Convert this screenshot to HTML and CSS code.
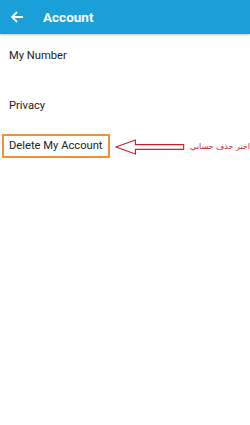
FILE: index.html
```html
<!DOCTYPE html>
<html>
<head>
<meta charset="utf-8">
<link rel="stylesheet" href="styles.css">
</head>
<body>
<header class="bar">
  <svg class="back" width="14" height="14" viewBox="0 0 14 14"><path d="M13 7H2M7 2L2 7l5 5" fill="none" stroke="#fff" stroke-width="1.8"/></svg>
  <span class="title">Account</span>
</header>
<main class="list">
  <div class="item">My Number</div>
  <div class="item">Privacy</div>
  <div class="row">
    <div class="item boxed">Delete My Account</div>
    <svg class="arrow" width="76" height="18" viewBox="0 0 76 18"><path d="M1 9L22 1.5V6.5H74V11.5H22V16.5Z" fill="none" stroke="#c8202a" stroke-width="1.2"/></svg>
    <span class="note" dir="rtl">اختر حذف حسابي</span>
  </div>
</main>
</body>
</html>
```
FILE: styles.css
```css
html, body { margin: 0; padding: 0; background: #fff; }
body { width: 250px; height: 425px; font-family: Roboto, "Noto Sans", sans-serif; overflow: hidden; }
.bar { height: 34px; background: #1b9fd8; display: flex; align-items: center; box-shadow: 0 1px 2px rgba(0,0,0,0.25); }
.back { margin-left: 10px; }
.title { margin-left: 19px; color: #fff; font-weight: 700; font-size: 13.5px; }
.list { display: flex; flex-direction: column; padding-top: 13px; }
.item { font-size: 11.2px; color: #222; padding-left: 9px; height: 18px; line-height: 18px; margin-bottom: 32px; white-space: nowrap; }
.row { display: flex; align-items: center; margin-top: -13px; }
.boxed { margin: 0 0 0 2px; padding: 0 5px; height: 20px; line-height: 20px; border: 2px solid #f0913b; }
.arrow { margin-left: 5px; margin-top: 1px; }
.note { color: #c8202a; font-size: 8px; margin-left: 5px; font-family: "DejaVu Sans", sans-serif; white-space: nowrap; }
```
